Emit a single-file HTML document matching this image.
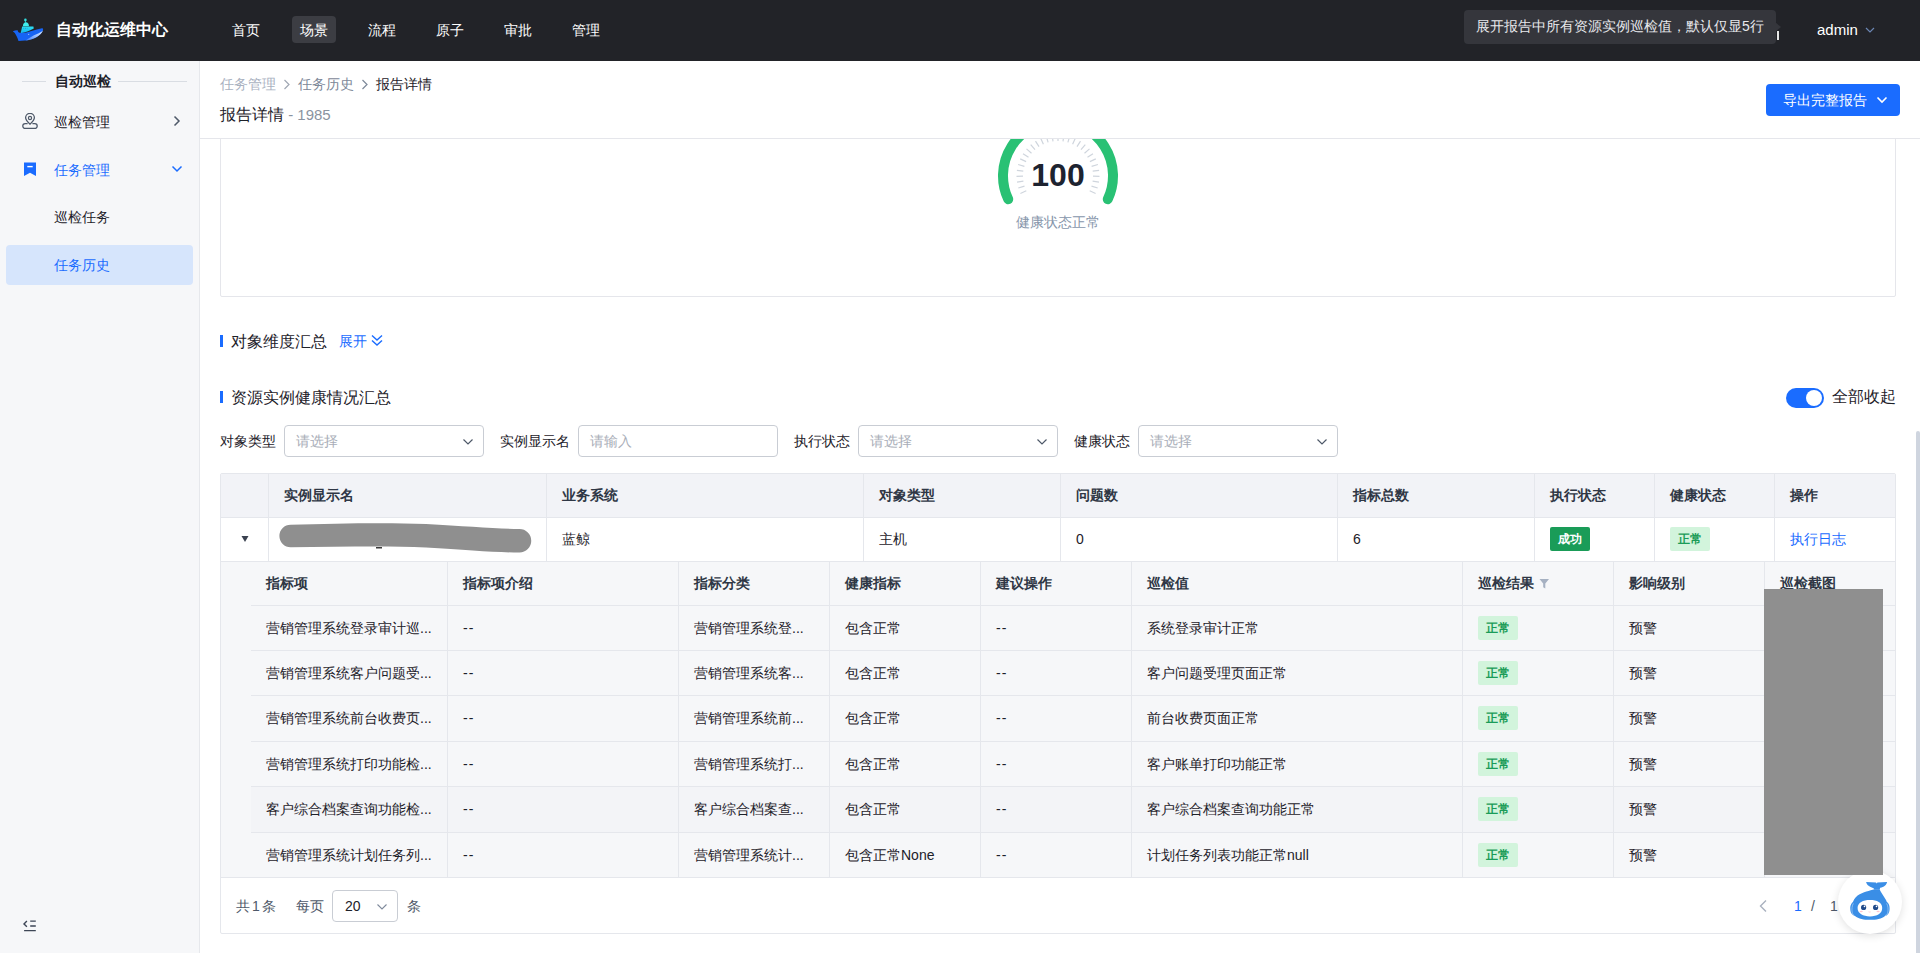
<!DOCTYPE html>
<html><head><meta charset="utf-8">
<style>
*{box-sizing:border-box;margin:0;padding:0}
html,body{width:1920px;height:953px;overflow:hidden;background:#fff;font-family:"Liberation Sans",sans-serif;font-size:14px;color:#1d2129}
.t{position:absolute;white-space:nowrap;line-height:20px}
.b{position:absolute}
#hdr{position:absolute;left:0;top:0;width:1920px;height:61px;background:#222328}
.nav{position:absolute;top:16px;height:27px;line-height:29px;color:#fff;font-size:14px;padding:0 8px;border-radius:4px}
.nav.on{background:#3c3d43}
#side{position:absolute;left:0;top:61px;width:200px;height:892px;background:#f6f7f9;border-right:1px solid #e6e8ec}
#phead{position:absolute;left:200px;top:61px;width:1720px;height:78px;border-bottom:1px solid #e5e6eb;background:#fff}
#clip{position:absolute;left:200px;top:139px;width:1720px;height:814px;overflow:hidden}
#inner{position:absolute;left:-200px;top:-139px;width:1920px;height:953px}
.sel{position:absolute;height:32px;border:1px solid #c9cdd4;border-radius:4px;background:#fff}
.ph{position:absolute;left:11px;top:5px;line-height:20px;color:#a9aeb8;font-size:14px}
.th{position:absolute;font-weight:bold;color:#2f3745;line-height:20px;white-space:nowrap}
.td{position:absolute;color:#1d2129;line-height:20px;white-space:nowrap}
.vl{position:absolute;width:1px;background:#e5e7ec}
.hl{position:absolute;height:1px;background:#e5e7ec}
.tag{position:absolute;height:24px;line-height:24px;font-size:12px;font-weight:bold;padding:0 8px;border-radius:2px}
.tg{background:#d2f4dc;color:#1a9c58}
</style></head><body>
<div id="hdr">
  <svg class="b" style="left:8px;top:10px" width="40" height="40" viewBox="0 0 40 40">
    <defs><linearGradient id="bel" x1="0" y1="1" x2="1" y2="0"><stop offset="0" stop-color="#3f7ff5"/><stop offset="0.6" stop-color="#a9c8ff"/><stop offset="1" stop-color="#e6efff"/></linearGradient>
    <linearGradient id="tw" x1="0" y1="0" x2="0" y2="1"><stop offset="0" stop-color="#2ee0f2"/><stop offset="1" stop-color="#12b4f0"/></linearGradient></defs>
    <path d="M17.4 10 V12.5" stroke="#2fd8d8" stroke-width="0.9"/>
    <circle cx="17.4" cy="9.9" r="1.3" fill="#33dede"/>
    <path d="M14.9 16.2 C14.9 13.6 16.3 12.3 17.9 12.3 C19.6 12.3 21 13.6 21 16.2 Z" fill="#40eeec"/>
    <path d="M12.6 23.2 L14.2 16.6 L25.4 16.5 L25.8 18.6 C22 20.8 17 22.8 12.6 23.2 Z" fill="url(#tw)"/>
    <path d="M15.2 18.3 H19.5" stroke="#139fc8" stroke-width="0.8" stroke-dasharray="1 0.8"/>
    <path d="M4.8 21.3 C6.5 20.6 8.5 20.2 9.8 20.4 C9.8 21.6 10.8 22.9 13 23.1 C20 23 27 19.5 34 18.3 C35.2 18.1 35.4 19.5 34.8 20.8 C32 26 25 30 17 30.6 L10.5 31 C9.8 28.5 8.5 25.5 6.8 23 C6 22.3 5.2 22 4.8 21.3 Z" fill="#1764f4"/>
    <path d="M17.5 30.5 C21 28.2 25 25.5 29 24 C31.5 23 33.6 21.8 35 20.5 C33 25.5 26.5 29.6 17.5 30.5 Z" fill="url(#bel)"/>
    <circle cx="20.6" cy="24.4" r="0.7" fill="#8ab4ff"/>
  </svg>
  <div class="t" style="left:56px;top:20px;color:#fff;font-size:16px;font-weight:bold">自动化运维中心</div>
  <div class="nav" style="left:224px">首页</div>
  <div class="nav on" style="left:292px">场景</div>
  <div class="nav" style="left:360px">流程</div>
  <div class="nav" style="left:428px">原子</div>
  <div class="nav" style="left:496px">审批</div>
  <div class="nav" style="left:564px">管理</div>
  <div class="b" style="left:1464px;top:10px;width:312px;height:34px;background:#35363c;border-radius:4px"></div>
  <div class="b" style="left:1775px;top:22px;width:0;height:0;border-top:5px solid transparent;border-bottom:5px solid transparent;border-left:6px solid #35363c"></div>
  <div class="t" style="left:1476px;top:16px;color:#e8e9ed;font-size:14px">展开报告中所有资源实例巡检值，默认仅显5行</div>
  <div class="b" style="left:1777px;top:31px;width:2px;height:9px;background:#e6e6e6"></div>
  <div class="t" style="left:1817px;top:20px;color:#fff;font-size:15px">admin</div>
  <svg class="b" style="left:1864px;top:25px" width="12" height="10" viewBox="0 0 12 10"><path d="M2 3 L6 7 L10 3" fill="none" stroke="#6b86b3" stroke-width="1.2"/></svg>
</div>
<div id="side">
  <div class="b" style="left:22px;top:20px;width:24px;height:1px;background:#d9dde3"></div>
  <div class="t" style="left:55px;top:10px;font-weight:bold;color:#1d2129">自动巡检</div>
  <div class="b" style="left:118px;top:20px;width:69px;height:1px;background:#d9dde3"></div>
  <svg class="b" style="left:22px;top:52px" width="17" height="17" viewBox="0 0 17 17">
    <path d="M8 11.2 C5.4 8.7 3.6 7 3.6 4.8 A4.4 4.4 0 0 1 12.4 4.8 C12.4 7 10.6 8.7 8 11.2 Z" fill="none" stroke="#4e5969" stroke-width="1.3"/>
    <circle cx="8" cy="5" r="1.6" fill="none" stroke="#4e5969" stroke-width="1.2"/>
    <path d="M5.6 10.6 H3.2 A2.4 2.4 0 0 0 3.2 15.4 H12.8 A2.4 2.4 0 0 0 12.8 10.6 H10.4" fill="none" stroke="#4e5969" stroke-width="1.3"/>
  </svg>
  <div class="t" style="left:54px;top:51px;color:#1d2129">巡检管理</div>
  <svg class="b" style="left:172px;top:54px" width="10" height="12" viewBox="0 0 10 12"><path d="M2.5 1.5 L7 6 L2.5 10.5" fill="none" stroke="#4e5969" stroke-width="1.5"/></svg>
  <svg class="b" style="left:24px;top:101px" width="13" height="15" viewBox="0 0 13 15"><path d="M0 0.5 H12 V14 L6 10.8 L0 14 Z" fill="#1a6cff"/><path d="M3.3 4.6 H8.7" stroke="#fff" stroke-width="1.4"/></svg>
  <div class="t" style="left:54px;top:99px;color:#1a6cff">任务管理</div>
  <svg class="b" style="left:171px;top:103px" width="12" height="10" viewBox="0 0 12 10"><path d="M1.5 2.5 L6 7 L10.5 2.5" fill="none" stroke="#1a6cff" stroke-width="1.5"/></svg>
  <div class="t" style="left:54px;top:146px;color:#1d2129">巡检任务</div>
  <div class="b" style="left:6px;top:184px;width:187px;height:40px;background:#d6e5fc;border-radius:4px"></div>
  <div class="t" style="left:54px;top:194px;color:#1a6cff">任务历史</div>
  <svg class="b" style="left:22px;top:856px" width="16" height="16" viewBox="0 0 16 16"><path d="M4.9 4.1 L2 6.9 L4.9 9.7" fill="none" stroke="#3d4656" stroke-width="1.4"/><path d="M8.2 4.2 H13.8 M8.2 9 H13.8 M2.1 13.6 H13.8" stroke="#3d4656" stroke-width="1.3"/></svg>
</div>
<div id="phead">
  <div class="t" style="left:20px;top:13px;color:#a9b1bf">任务管理</div>
  <svg class="b" style="left:82px;top:18px" width="10" height="12" viewBox="0 0 10 12"><path d="M2.5 1 L7 5.5 L2.5 10" fill="none" stroke="#a0a7b3" stroke-width="1.2"/></svg>
  <div class="t" style="left:98px;top:13px;color:#7d8899">任务历史</div>
  <svg class="b" style="left:160px;top:18px" width="10" height="12" viewBox="0 0 10 12"><path d="M2.5 1 L7 5.5 L2.5 10" fill="none" stroke="#7d8899" stroke-width="1.2"/></svg>
  <div class="t" style="left:176px;top:13px;color:#1d2129">报告详情</div>
  <div class="t" style="left:20px;top:43px;color:#1d2129;font-size:16px;line-height:22px">报告详情<span style="color:#8a93a0;font-size:15px"> - 1985</span></div>
  <div class="b" style="left:1566px;top:23px;width:134px;height:32px;background:#1a6cff;border-radius:4px"></div>
  <div class="t" style="left:1583px;top:29px;color:#fff">导出完整报告</div>
  <svg class="b" style="left:1676px;top:34px" width="12" height="10" viewBox="0 0 12 10"><path d="M1.5 2.5 L6 7 L10.5 2.5" fill="none" stroke="#fff" stroke-width="1.6"/></svg>
</div>
<div id="clip"><div id="inner">
<div class="b" style="left:220px;top:90px;width:1676px;height:207px;border:1px solid #e5e6eb;border-radius:2px"></div>
<svg class="b" style="left:0;top:0" width="1920" height="300" viewBox="0 0 1920 300">
<path d="M1026.3 190.8L1020.4 193.5M1024.5 186.1L1018.3 188.0M1023.4 181.2L1017.0 182.2M1023.0 176.2L1016.5 176.3M1023.3 171.2L1016.9 170.3M1024.4 166.3L1018.1 164.5M1026.1 161.6L1020.2 158.9M1028.5 157.2L1023.0 153.7M1031.5 153.2L1026.5 148.9M1035.0 149.6L1030.7 144.7M1039.0 146.6L1035.5 141.1M1043.4 144.2L1040.7 138.3M1048.1 142.4L1046.3 136.2M1053.0 141.4L1052.1 134.9M1058.0 141.0L1058.0 134.5M1063.0 141.4L1063.9 134.9M1067.9 142.4L1069.7 136.2M1072.6 144.2L1075.3 138.3M1077.0 146.6L1080.5 141.1M1081.0 149.6L1085.3 144.7M1084.5 153.2L1089.5 148.9M1087.5 157.2L1093.0 153.7M1089.9 161.6L1095.8 158.9M1091.6 166.3L1097.9 164.5M1092.7 171.2L1099.1 170.3M1093.0 176.2L1099.5 176.3M1092.6 181.2L1099.0 182.2M1091.5 186.1L1097.7 188.0M1089.7 190.8L1095.6 193.5" stroke="#cfd5dd" stroke-width="1.2"/>
<path d="M1008.2 199.2 A55 55 0 1 1 1107.8 199.2" fill="none" stroke="#29c174" stroke-width="10" stroke-linecap="round"/>
</svg>
<div class="t" style="left:1008px;top:157px;width:100px;text-align:center;font-size:32px;line-height:36px;font-weight:bold;color:#1d2330">100</div>
<div class="t" style="left:1008px;top:212px;width:100px;text-align:center;font-size:14px;color:#8796ab">健康状态正常</div>
<div class="b" style="left:220px;top:335px;width:3px;height:12px;background:#1a6cff"></div>
<div class="t" style="left:231px;top:331px;font-size:16px;line-height:22px;color:#1d2129">对象维度汇总</div>
<div class="t" style="left:339px;top:331px;color:#1a6cff">展开</div>
<svg class="b" style="left:370px;top:334px" width="14" height="13" viewBox="0 0 14 13"><path d="M2 1.5 L7 6 L12 1.5 M2 6.5 L7 11 L12 6.5" fill="none" stroke="#1a6cff" stroke-width="1.4"/></svg>
<div class="b" style="left:220px;top:391px;width:3px;height:12px;background:#1a6cff"></div>
<div class="t" style="left:231px;top:387px;font-size:16px;line-height:22px;color:#1d2129">资源实例健康情况汇总</div>
<div class="b" style="left:1786px;top:388px;width:38px;height:20px;border-radius:10px;background:#1a6cff"></div>
<div class="b" style="left:1806px;top:390px;width:16px;height:16px;border-radius:8px;background:#fff"></div>
<div class="t" style="left:1832px;top:386px;font-size:16px;line-height:22px;color:#1d2129">全部收起</div>
<div class="t" style="left:220px;top:431px;color:#1d2129">对象类型</div>
<div class="sel" style="left:284px;top:425px;width:200px"><div class="ph">请选择</div>
<svg class="b" style="left:177px;top:11px" width="12" height="10" viewBox="0 0 12 10"><path d="M1.5 2.5 L6 7 L10.5 2.5" fill="none" stroke="#4e5969" stroke-width="1.2"/></svg>
</div>
<div class="t" style="left:500px;top:431px;color:#1d2129">实例显示名</div>
<div class="sel" style="left:578px;top:425px;width:200px"><div class="ph">请输入</div>
</div>
<div class="t" style="left:794px;top:431px;color:#1d2129">执行状态</div>
<div class="sel" style="left:858px;top:425px;width:200px"><div class="ph">请选择</div>
<svg class="b" style="left:177px;top:11px" width="12" height="10" viewBox="0 0 12 10"><path d="M1.5 2.5 L6 7 L10.5 2.5" fill="none" stroke="#4e5969" stroke-width="1.2"/></svg>
</div>
<div class="t" style="left:1074px;top:431px;color:#1d2129">健康状态</div>
<div class="sel" style="left:1138px;top:425px;width:200px"><div class="ph">请选择</div>
<svg class="b" style="left:177px;top:11px" width="12" height="10" viewBox="0 0 12 10"><path d="M1.5 2.5 L6 7 L10.5 2.5" fill="none" stroke="#4e5969" stroke-width="1.2"/></svg>
</div>
<div class="b" style="left:220px;top:473px;width:1676px;height:461px;border:1px solid #e5e7ec;border-radius:2px;background:#fff"></div>
<div class="b" style="left:221px;top:474px;width:1674px;height:43px;background:#f2f3f7"></div>
<div class="b" style="left:221px;top:562px;width:1674px;height:315px;background:#f6f7f9"></div>
<div class="b" style="left:251px;top:787px;width:1644px;height:45px;background:#f3f4f7"></div>
<div class="hl" style="left:221px;top:517px;width:1674px"></div>
<div class="hl" style="left:221px;top:561px;width:1674px"></div>
<div class="hl" style="left:251px;top:605px;width:1644px"></div>
<div class="hl" style="left:251px;top:650px;width:1644px"></div>
<div class="hl" style="left:251px;top:695px;width:1644px"></div>
<div class="hl" style="left:251px;top:741px;width:1644px"></div>
<div class="hl" style="left:251px;top:786px;width:1644px"></div>
<div class="hl" style="left:251px;top:832px;width:1644px"></div>
<div class="hl" style="left:221px;top:877px;width:1674px"></div>
<div class="vl" style="left:268px;top:474px;height:87px"></div>
<div class="vl" style="left:546px;top:474px;height:87px"></div>
<div class="vl" style="left:863px;top:474px;height:87px"></div>
<div class="vl" style="left:1060px;top:474px;height:87px"></div>
<div class="vl" style="left:1337px;top:474px;height:87px"></div>
<div class="vl" style="left:1534px;top:474px;height:87px"></div>
<div class="vl" style="left:1654px;top:474px;height:87px"></div>
<div class="vl" style="left:1774px;top:474px;height:87px"></div>
<div class="vl" style="left:447px;top:562px;height:315px"></div>
<div class="vl" style="left:678px;top:562px;height:315px"></div>
<div class="vl" style="left:829px;top:562px;height:315px"></div>
<div class="vl" style="left:980px;top:562px;height:315px"></div>
<div class="vl" style="left:1131px;top:562px;height:315px"></div>
<div class="vl" style="left:1462px;top:562px;height:315px"></div>
<div class="vl" style="left:1613px;top:562px;height:315px"></div>
<div class="vl" style="left:1764px;top:562px;height:315px"></div>
<div class="th" style="left:284px;top:485px">实例显示名</div>
<div class="th" style="left:562px;top:485px">业务系统</div>
<div class="th" style="left:879px;top:485px">对象类型</div>
<div class="th" style="left:1076px;top:485px">问题数</div>
<div class="th" style="left:1353px;top:485px">指标总数</div>
<div class="th" style="left:1550px;top:485px">执行状态</div>
<div class="th" style="left:1670px;top:485px">健康状态</div>
<div class="th" style="left:1790px;top:485px">操作</div>
<svg class="b" style="left:240px;top:535px" width="10" height="8" viewBox="0 0 10 8"><path d="M1.5 1 H8.5 L5 7 Z" fill="#3a4150"/></svg>
<svg class="b" style="left:276px;top:519px" width="260" height="38" viewBox="0 0 260 38"><path d="M14.6 5.8 C60 4.5 110 3.5 150 5 C190 7 220 10 243.5 10 A11.75 11.75 0 0 1 243.5 33.5 C220 33.5 190 31 150 28.5 C110 26.5 60 28 14.6 28.2 A11.2 11.2 0 0 1 14.6 5.8 Z" fill="#8f8f8f"/><rect x="100" y="28" width="6" height="1.5" fill="#3a3a3a"/></svg>
<div class="td" style="left:562px;top:529px">蓝鲸</div>
<div class="td" style="left:879px;top:529px">主机</div>
<div class="td" style="left:1076px;top:529px">0</div>
<div class="td" style="left:1353px;top:529px">6</div>
<div class="tag" style="left:1550px;top:527px;background:#1a9c58;color:#fff">成功</div>
<div class="tag tg" style="left:1670px;top:527px">正常</div>
<div class="td" style="left:1790px;top:529px;color:#1a6cff">执行日志</div>
<div class="th" style="left:266px;top:573px">指标项</div>
<div class="th" style="left:463px;top:573px">指标项介绍</div>
<div class="th" style="left:694px;top:573px">指标分类</div>
<div class="th" style="left:845px;top:573px">健康指标</div>
<div class="th" style="left:996px;top:573px">建议操作</div>
<div class="th" style="left:1147px;top:573px">巡检值</div>
<div class="th" style="left:1478px;top:573px">巡检结果</div>
<div class="th" style="left:1629px;top:573px">影响级别</div>
<div class="th" style="left:1780px;top:573px">巡检截图</div>
<svg class="b" style="left:1539px;top:578px" width="11" height="12" viewBox="0 0 11 12"><path d="M0.5 1 H10 L6.3 5.6 V10.5 L4.2 9.2 V5.6 Z" fill="#a6b1c2"/></svg>
<div class="td" style="left:266px;top:617.5px">营销管理系统登录审计巡...</div>
<div class="td" style="left:463px;top:617.5px"><span style="letter-spacing:1px">--</span></div>
<div class="td" style="left:694px;top:617.5px">营销管理系统登...</div>
<div class="td" style="left:845px;top:617.5px">包含正常</div>
<div class="td" style="left:996px;top:617.5px"><span style="letter-spacing:1px">--</span></div>
<div class="td" style="left:1147px;top:617.5px">系统登录审计正常</div>
<div class="td" style="left:1629px;top:617.5px">预警</div>
<div class="tag tg" style="left:1478px;top:615.5px">正常</div>
<div class="td" style="left:266px;top:662.5px">营销管理系统客户问题受...</div>
<div class="td" style="left:463px;top:662.5px"><span style="letter-spacing:1px">--</span></div>
<div class="td" style="left:694px;top:662.5px">营销管理系统客...</div>
<div class="td" style="left:845px;top:662.5px">包含正常</div>
<div class="td" style="left:996px;top:662.5px"><span style="letter-spacing:1px">--</span></div>
<div class="td" style="left:1147px;top:662.5px">客户问题受理页面正常</div>
<div class="td" style="left:1629px;top:662.5px">预警</div>
<div class="tag tg" style="left:1478px;top:660.5px">正常</div>
<div class="td" style="left:266px;top:708.0px">营销管理系统前台收费页...</div>
<div class="td" style="left:463px;top:708.0px"><span style="letter-spacing:1px">--</span></div>
<div class="td" style="left:694px;top:708.0px">营销管理系统前...</div>
<div class="td" style="left:845px;top:708.0px">包含正常</div>
<div class="td" style="left:996px;top:708.0px"><span style="letter-spacing:1px">--</span></div>
<div class="td" style="left:1147px;top:708.0px">前台收费页面正常</div>
<div class="td" style="left:1629px;top:708.0px">预警</div>
<div class="tag tg" style="left:1478px;top:706.0px">正常</div>
<div class="td" style="left:266px;top:753.5px">营销管理系统打印功能检...</div>
<div class="td" style="left:463px;top:753.5px"><span style="letter-spacing:1px">--</span></div>
<div class="td" style="left:694px;top:753.5px">营销管理系统打...</div>
<div class="td" style="left:845px;top:753.5px">包含正常</div>
<div class="td" style="left:996px;top:753.5px"><span style="letter-spacing:1px">--</span></div>
<div class="td" style="left:1147px;top:753.5px">客户账单打印功能正常</div>
<div class="td" style="left:1629px;top:753.5px">预警</div>
<div class="tag tg" style="left:1478px;top:751.5px">正常</div>
<div class="td" style="left:266px;top:799.0px">客户综合档案查询功能检...</div>
<div class="td" style="left:463px;top:799.0px"><span style="letter-spacing:1px">--</span></div>
<div class="td" style="left:694px;top:799.0px">客户综合档案查...</div>
<div class="td" style="left:845px;top:799.0px">包含正常</div>
<div class="td" style="left:996px;top:799.0px"><span style="letter-spacing:1px">--</span></div>
<div class="td" style="left:1147px;top:799.0px">客户综合档案查询功能正常</div>
<div class="td" style="left:1629px;top:799.0px">预警</div>
<div class="tag tg" style="left:1478px;top:797.0px">正常</div>
<div class="td" style="left:266px;top:844.5px">营销管理系统计划任务列...</div>
<div class="td" style="left:463px;top:844.5px"><span style="letter-spacing:1px">--</span></div>
<div class="td" style="left:694px;top:844.5px">营销管理系统计...</div>
<div class="td" style="left:845px;top:844.5px">包含正常None</div>
<div class="td" style="left:996px;top:844.5px"><span style="letter-spacing:1px">--</span></div>
<div class="td" style="left:1147px;top:844.5px">计划任务列表功能正常null</div>
<div class="td" style="left:1629px;top:844.5px">预警</div>
<div class="tag tg" style="left:1478px;top:842.5px">正常</div>
<div class="t" style="left:236px;top:896px;color:#4e5969">共<span style="margin:0 2px">1</span>条</div>
<div class="t" style="left:296px;top:896px;color:#4e5969">每页</div>
<div class="sel" style="left:332px;top:890px;width:66px"><div class="ph" style="left:12px;color:#1d2129">20</div><svg class="b" style="left:43px;top:11px" width="12" height="10" viewBox="0 0 12 10"><path d="M1.5 2.5 L6 7 L10.5 2.5" fill="none" stroke="#7f8a9c" stroke-width="1.1"/></svg></div>
<div class="t" style="left:407px;top:896px;color:#4e5969">条</div>
<svg class="b" style="left:1757px;top:899px" width="12" height="14" viewBox="0 0 12 14"><path d="M9 1.5 L3.5 7 L9 12.5" fill="none" stroke="#a9b1bf" stroke-width="1.4"/></svg>
<div class="t" style="left:1794px;top:896px;color:#1a6cff">1</div>
<div class="t" style="left:1811px;top:896px;color:#4e5969">/</div>
<div class="t" style="left:1830px;top:896px;color:#4e5969">1</div>
</div></div>
<div class="b" style="left:1916px;top:431px;width:4px;height:522px;background:#cfd5df;border-radius:2px 2px 0 0"></div>
<div class="b" style="left:1838px;top:870px;width:64px;height:64px;border-radius:32px;background:#fff;box-shadow:0 2px 8px rgba(0,0,0,0.12)"></div>
<svg class="b" style="left:1846px;top:878px" width="48" height="48" viewBox="0 0 48 48">
<path d="M20.1 4 L30 4.5 L30.7 5.6 L31.4 4.5 L41.1 4 C40.6 7 38 9.3 34.2 9.8 L33.6 11.8 L28.4 11.4 C28 10.2 26.2 9.6 24.6 9 C22.2 8 20.5 6.2 20.1 4 Z" fill="#3a8ee6"/>
<path d="M28.4 11.2 C24 12.8 17 13.5 11.6 17.6 C8.5 20 7 23 6.5 26 C6 30 6.5 35 9 38 C12.5 41 18 41.8 24 41.8 C30 41.8 36 41 39 38 C41.5 35 42 30 41.2 26 C40.8 23.5 40 22 40 22 C37.5 18 35 14.5 33.6 11.6 Z" fill="#3a8ee6"/>
<path d="M8.5 23.6 C5 24.5 4.2 28 4.3 30.7 C4.4 34 5.5 37 9 37.8 Z M39.5 23.6 C43 24.5 43.7 28 43.6 30.7 C43.5 34 42.5 37 39.5 37.8 Z" fill="#3a8ee6"/>
<path d="M7.4 25.4 C5.9 27.5 5.7 31.5 6.1 34 C6.4 35.5 7 36.4 7.8 37 M40.6 25.4 C42.1 27.5 42.3 31.5 41.9 34 C41.6 35.5 41 36.4 40.2 37" fill="none" stroke="#d6e8fb" stroke-width="0.5"/>
<path d="M11.6 30 C11.6 24.5 17 22 24 22 C31 22 36.2 24.5 36.2 30 C36.2 35.5 31 38.4 24 38.4 C17 38.4 11.6 35.5 11.6 30 Z" fill="#fff"/>
<circle cx="17.6" cy="29.4" r="2.6" fill="#1f4a8a"/><circle cx="29.6" cy="29.4" r="2.6" fill="#1f4a8a"/>
<circle cx="18.5" cy="28.4" r="0.8" fill="#fff"/><circle cx="30.5" cy="28.4" r="0.8" fill="#fff"/>
<ellipse cx="15.2" cy="33.5" rx="1.6" ry="0.8" fill="#ffc4cf"/><ellipse cx="32.1" cy="33.5" rx="1.6" ry="0.8" fill="#ffc4cf"/>
<path d="M22.6 33.8 Q23.1 34.5 23.6 34 Q24.1 34.5 24.6 33.8" fill="none" stroke="#ffb0bd" stroke-width="0.6"/>
</svg>
<div class="b" style="left:1764px;top:589px;width:119px;height:286px;background:#8f8f8f"></div>
</body></html>
